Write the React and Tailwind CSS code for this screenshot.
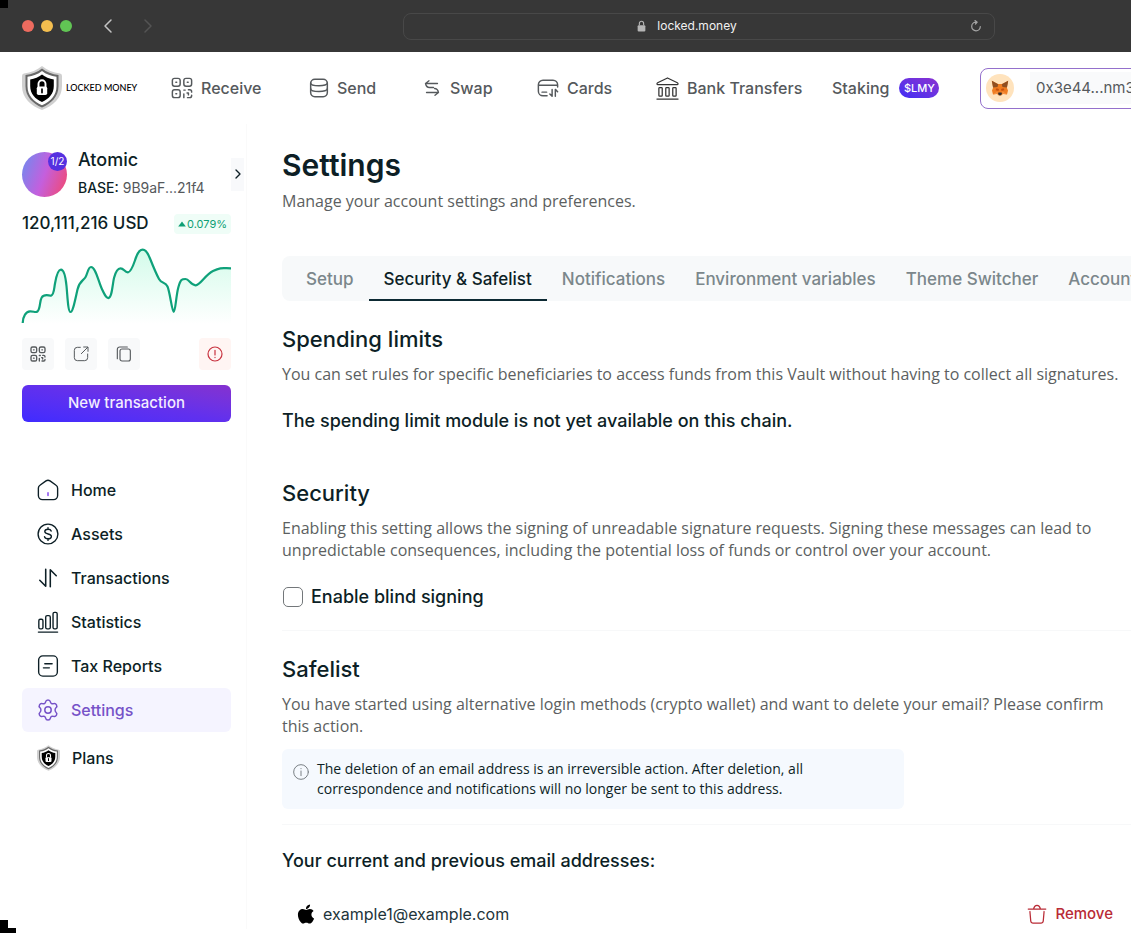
import { ChevronLeft, ChevronRight } from 'lucide-react'
import { FaApple } from 'react-icons/fa'
import clsx from 'clsx'

function Icon({ className, children, box = 24, stroke = 1.5 }) {
  return (
    <svg
      viewBox={`0 0 ${box} ${box}`}
      fill="none"
      stroke="currentColor"
      strokeWidth={stroke}
      strokeLinecap="round"
      strokeLinejoin="round"
      aria-hidden="true"
      className={clsx('shrink-0', className)}
    >
      {children}
    </svg>
  )
}

function QrIcon({ className, stroke = 1.6 }) {
  return (
    <Icon className={className} stroke={stroke}>
      <rect x="1.5" y="1.5" width="8.5" height="8.5" rx="2.4" />
      <rect x="14" y="1.5" width="8.5" height="8.5" rx="2.4" />
      <rect x="1.5" y="14" width="8.5" height="8.5" rx="2.4" />
      <path d="M5.3 5.7h.9M17.8 5.7h.9M5.3 18.2h.9M14 14.3h1.5M19 14h1.5a2 2 0 0 1 2 2v.5M14 18.5v4M17.5 17.5H19v2M22.5 20v.5a2 2 0 0 1-2 2H18" />
    </Icon>
  )
}

function DatabaseIcon({ className }) {
  return (
    <Icon className={className} stroke={1.8}>
      <rect x="2" y="1.5" width="20" height="21" rx="5" />
      <path d="M2 6c0 2 4 3.3 10 3.3S22 8 22 6M2 13c0 2 4 3.3 10 3.3S22 15 22 13" />
    </Icon>
  )
}

function SwapIcon({ className }) {
  return (
    <Icon className={className} box={16} stroke={1.3}>
      <path d="M13.5 3.5h-12L5 .8M1.5 3.5C2 6 3 7.5 5.5 7.5h4M2.5 12.5h12L11 15.3M14.5 12.5c-.5-2.500-1.500-4-4-4" />
    </Icon>
  )
}

function CardIcon({ className }) {
  return (
    <Icon className={className} stroke={1.6}>
      <path d="M11 20.5H6.5A5 5 0 0 1 1.5 15.5v-7a5 5 0 0 1 5-5h11a5 5 0 0 1 5 5V11M1.5 9h21M5.5 16.5h5" />
      <path d="M16.5 13.5V21L14 18.5M20 21v-7.5l2.5 2.500" />
    </Icon>
  )
}

function BankIcon({ className }) {
  return (
    <Icon className={className} stroke={1.3}>
      <path d="M2 8c-1.2 0-1.3-1.5-.3-2L12 1l10.3 5c1 .5.9 2-.3 2Z" />
      <rect x="3" y="11" width="3.5" height="9" rx=".8" />
      <rect x="10.2" y="11" width="3.5" height="9" rx=".8" />
      <rect x="17.5" y="11" width="3.5" height="9" rx=".8" />
      <path d="M1 23h22" />
    </Icon>
  )
}

function HomeIcon({ className }) {
  return (
    <Icon className={className}>
      <path d="M3.2 6.8 9.8 2.1a3.8 3.8 0 0 1 4.4 0l6.6 4.7a3.8 3.8 0 0 1 1.7 3.2v8a4.5 4.5 0 0 1-4.5 4.5H6A4.5 4.5 0 0 1 1.5 18v-8a3.8 3.8 0 0 1 1.7-3.2Z" />
      <path d="M12 15v3" stroke="#7c3aed" />
    </Icon>
  )
}

function AssetsIcon({ className }) {
  return (
    <Icon className={className}>
      <circle cx="12" cy="12" r="10.8" />
      <path d="M15.5 8.8c-.4-1.3-1.7-2-3.5-2-2 0-3.500 1-3.500 2.600 0 3.700 7.200 1.600 7.200 5.200 0 1.600-1.600 2.600-3.700 2.600s-3.500-.8-3.800-2.300M12 5v1.800M12 17.200V19" />
    </Icon>
  )
}

function TransactionsIcon({ className }) {
  return (
    <Icon className={className} stroke={1.7}>
      <path d="M9.5 2.5V21L3 14.5M14.5 21.5V3L21 9.5" />
    </Icon>
  )
}

function StatisticsIcon({ className }) {
  return (
    <Icon className={className}>
      <rect x="2" y="9" width="4.5" height="10.5" rx="1.6" />
      <rect x="9.5" y="5" width="5" height="14.5" rx="1.6" />
      <rect x="17.5" y="1.5" width="4.5" height="18" rx="1.6" />
      <path d="M1.5 23h21" />
    </Icon>
  )
}

function ReportsIcon({ className }) {
  return (
    <Icon className={className}>
      <rect x="1.8" y="1" width="20.4" height="22" rx="4.5" />
      <path d="M8.5 9.5h8M7 14h6.5" />
    </Icon>
  )
}

function SettingsIcon({ className }) {
  return (
    <Icon className={className} stroke={1.6}>
      <circle cx="12" cy="12" r="3.5" />
      <path d="M9.4 3.1C9.9.3 14.1.3 14.6 3.1c.3 1.7 1.9 2.6 3.5 2 2.7-1 4.8 2.7 2.6 4.5-1.3 1.1-1.3 3.7 0 4.8 2.2 1.8.1 5.5-2.6 4.5-1.6-.6-3.2.3-3.5 2-.5 2.8-4.7 2.8-5.2 0-.3-1.7-1.9-2.6-3.5-2-2.7 1-4.8-2.7-2.6-4.5 1.3-1.1 1.3-3.7 0-4.8C1.1 7.800 3.200 4.100 5.900 5.100c1.600.6 3.200-.3 3.500-2Z" />
    </Icon>
  )
}

function ShareIcon({ className }) {
  return (
    <Icon className={className}>
      <path d="M11 2H6.5A4.5 4.5 0 0 0 2 6.5v11A4.5 4.5 0 0 0 6.5 22h11a4.5 4.5 0 0 0 4.5-4.5V12M12.5 11.5 22 2M16 1.5h6.500V8" />
    </Icon>
  )
}

function CopyIcon({ className }) {
  return (
    <Icon className={className} stroke={1.7}>
      <rect x="6" y="4.5" width="15.5" height="18" rx="3" />
      <path d="M2 19V5a3.5 3.5 0 0 1 3.5-3.5H17" />
    </Icon>
  )
}

function AlertIcon({ className }) {
  return (
    <Icon className={className} stroke={1.8}>
      <circle cx="12" cy="12" r="10.5" />
      <path d="M12 6.5v7M12 17v.3" />
    </Icon>
  )
}

function InfoIcon({ className }) {
  return (
    <Icon className={className} stroke={1.5}>
      <circle cx="12" cy="12" r="11" />
      <path d="M12 10.5v7M12 6.8v.3" />
    </Icon>
  )
}

function TrashIcon({ className }) {
  return (
    <Icon className={className} stroke={1.5}>
      <path d="M1.5 6h21M8 5.500C8.500 3 9.500 1.500 12 1.500s3.500 1.500 4 4M3.500 9l1 11.500a2.500 2.500 0 0 0 2.500 2.300h10a2.500 2.500 0 0 0 2.500-2.300l1-11.500" />
    </Icon>
  )
}

function Shield({ className }) {
  return (
    <svg viewBox="0 0 40 44" aria-hidden="true" className={clsx('shrink-0', className)}>
      <path d="M20 0c5 4 11 6.500 18 7.500q2 .3 2 2.500v10c0 12-9 20-20 24C9 40 0 32 0 20V10q0-2.200 2-2.500C9 6.500 15 4 20 0Z" fill="#d0d0d0" />
      <path d="M20 2.500c4.500 3.500 10 5.700 16.500 6.500v11c0 11-7.500 17.500-16.500 21.500C11 37.500 3.500 31 3.500 20V9C10 8.200 15.500 6 20 2.500Z" fill="#686868" />
      <path d="M20 5c4 3.200 9 5 14.500 5.800V20c0 9.500-6 15.500-14.500 19.300C11.500 35.500 5.500 29.500 5.500 20v-9.200C11 10 16 8.200 20 5Z" fill="#fff" />
      <path d="M20 8.500c3.300 2.600 7.300 4.200 11.800 4.900V20c0 8-5 12.800-11.800 16C13.200 32.800 8.200 28 8.200 20v-6.600c4.500-.7 8.500-2.300 11.800-4.900Z" fill="#000" />
      <path d="M16.500 21v-3.200a3.500 3.500 0 0 1 7 0V21" fill="none" stroke="#fff" strokeWidth="1.9" />
      <rect x="14.8" y="20.5" width="10.4" height="8.5" rx="1.8" fill="#fff" />
      <path d="M20 23v3.6" stroke="#000" strokeWidth="1.7" strokeLinecap="round" />
    </svg>
  )
}

function Fox({ className }) {
  return (
    <svg viewBox="0 0 18 16" aria-hidden="true" className={className}>
      <path d="M.8.8 2.200 7.500 1 10.500 2 14.500 6 14l2 1.500h2L12 14l4 .5 1-4-1.200-3L17.200.8 11 4H7Z" fill="#ef7d22" />
      <path d="M.8.8 7.200 4.200 6.500 7 2 7.500ZM17.200.8l-6.400 3.400.7 2.800 4.500.5Z" fill="#8f4f22" />
      <path d="m5.500 8.300 2.500.7L7.500 11 4.500 10.300ZM12.500 8.300l-2.500.7.500 2 3-.7Z" fill="#c8520f" />
      <path d="m7 13 .8-.6h2.400l.8.600-.8 2.200H7.800Z" fill="#33302e" />
      <path d="M2 14.300 6.500 11.500l.3 2.300ZM16 14.300 11.500 11.500l-.3 2.300Z" fill="#f79443" />
    </svg>
  )
}

const topNav = [
  { label: 'Receive', icon: QrIcon, size: 'size-[22px]' },
  { label: 'Send', icon: DatabaseIcon, size: 'size-5' },
  { label: 'Swap', icon: SwapIcon, size: 'mr-[2px] size-4' },
  { label: 'Cards', icon: CardIcon, size: 'size-[22px]' },
  { label: 'Bank Transfers', icon: BankIcon, size: 'size-[23px] text-[#333]' },
]

const sideNav = [
  { label: 'Home', icon: HomeIcon },
  { label: 'Assets', icon: AssetsIcon },
  { label: 'Transactions', icon: TransactionsIcon },
  { label: 'Statistics', icon: StatisticsIcon },
  { label: 'Tax Reports', icon: ReportsIcon },
  { label: 'Settings', icon: SettingsIcon, active: true },
]

const tabs = [
  'Setup',
  'Security & Safelist',
  'Notifications',
  'Environment variables',
  'Theme Switcher',
  'Account',
]

const balanceLine =
  'M.7 75C1 68 4 63.500 8 63.300S13 65 15.500 63.500C18.500 61 17.500 53 19.700 49.500S26 47 29 47.800C32 47 32 41 33 35.500 34.500 27 36.500 21.500 39 21.700S43.500 28 44.500 38C45.500 48 46 64 48.500 64S53.500 50 55.500 41.500C57.500 33 61 33 63.300 29.500S66 19 69 19C73.500 19 76.500 33.500 79.500 40S84 50 86.300 50.200C90 50 90.500 36 92 30S95 20.300 98.500 20.300 102.500 24.500 106 24.300 112 15 114 9.500 118 1.700 120.700 1.700 126 5.500 128 10.500 134 25.500 137 31 143 33 145.500 38.500 150 64 151.700 64 154 48 156.300 39.500 160 31 163.500 31 169 37.500 173.700 37.300 183 27 191 23 201 20.300 209 20.300'

function BrowserBar() {
  return (
    <div className="flex h-[52px] items-center bg-[#373737] pl-[22px]">
      <div className="flex w-[74px] gap-[7px]">
        <span className="size-3 rounded-full bg-[#ed6b5f]" />
        <span className="size-3 rounded-full bg-[#f4be4f]" />
        <span className="size-3 rounded-full bg-[#61c554]" />
      </div>
      <button aria-label="Back" className="text-[#c4c4c4]">
        <ChevronLeft className="size-6" strokeWidth={1.5} />
      </button>
      <button aria-label="Forward" className="ml-4 text-[#545454]">
        <ChevronRight className="size-6" strokeWidth={1.5} />
      </button>
      <div className="mr-[136px] ml-[243px] flex h-[27px] flex-1 items-center rounded-lg border border-[#484848] px-3">
        <div className="flex flex-1 items-center justify-center gap-[11px] pr-3 text-[12px] text-[#f1f1f1]">
          <svg viewBox="0 0 10 14" aria-hidden="true" className="h-3 w-[9px]">
            <path d="M2.500 6V4a2.500 2.500 0 0 1 5 0v2" fill="none" stroke="#b5b5b5" strokeWidth="1.3" />
            <rect x=".5" y="6" width="9" height="7.5" rx="1.3" fill="#b5b5b5" />
          </svg>
          locked.money
        </div>
        <button aria-label="Reload" className="text-[#a5a5a5]">
          <Icon className="size-3" box={12} stroke={1.2}>
            <path d="M6 2.200A4.300 4.300 0 1 0 10.300 6.500M5 .5l2.200 1.700L5.500 4" />
          </Icon>
        </button>
      </div>
    </div>
  )
}

function Header() {
  return (
    <header className="flex h-[72px] items-center pl-[22px] text-[16px] font-medium whitespace-nowrap text-[#55595c]">
      <a href="#home" className="flex w-[149px] shrink-0 items-center gap-1 font-['Lato',sans-serif] text-[9px] text-black">
        <Shield className="h-11 w-10" />
        LOCKED MONEY
      </a>
      <nav className="grid shrink-0 grid-cols-[138px_115px_113px_119px_176px_148px]">
        {topNav.map(({ label, icon: NavIcon, size }) => (
          <a key={label} href="#nav" className="flex items-center gap-2">
            <NavIcon className={size} />
            {label}
          </a>
        ))}
        <a href="#staking" className="flex items-center gap-[10px]">
          Staking
          <span className="flex h-5 w-10 items-center justify-center rounded-full bg-linear-to-tr from-[#3f2bf5] to-[#8a2fd0] text-[11px] text-white">
            $LMY
          </span>
        </a>
      </nav>
      <button className="flex h-[41px] w-[220px] shrink-0 items-center gap-4 rounded-lg border border-[#9470cc] pl-[5px]">
        <span className="flex size-7 items-center justify-center rounded-full bg-[#ffe3bd]">
          <Fox className="h-4 w-[18px]" />
        </span>
        <span className="flex h-8 flex-1 items-center bg-[#f9fafb] pl-[6px] text-[15px] font-normal">0x3e44...nm3f</span>
      </button>
    </header>
  )
}

function SquareButton({ label, danger, children }) {
  return (
    <button
      aria-label={label}
      className={clsx(
        'flex size-8 items-center justify-center rounded',
        danger ? 'ml-auto bg-[#fff5f3] text-[#c8323f]' : 'bg-[#f8f9fa] text-[#55595c]',
      )}
    >
      {children}
    </button>
  )
}

function Sidebar() {
  return (
    <aside className="w-[247px] shrink-0 border-r border-[#fafafa] pt-[22px] pl-[22px]">
      <div className="flex items-center">
        <div className="relative mr-[11px] size-[45px] shrink-0 rounded-full bg-linear-[110deg] from-[#6b8df0] via-[#c45fdd] via-50% to-[#f5476a]">
          <span className="absolute top-0 right-0 flex size-[19px] items-center justify-center rounded-full bg-[#5530e0] text-[10px] text-white">
            1/2
          </span>
        </div>
        <div className="min-w-0 flex-1 whitespace-nowrap">
          <p className="text-[18px] leading-7 font-medium">Atomic</p>
          <p className="text-[14px] leading-7 text-[#55595c]">
            <span className="font-medium text-[#0d1f26]">BASE:</span> 9B9aF...21f4
          </p>
        </div>
        <button aria-label="Collapse sidebar" className="mr-[2px] flex h-[33px] w-[13px] items-center justify-center bg-[#f8f9fb]">
          <ChevronRight className="size-4 shrink-0" strokeWidth={2} />
        </button>
      </div>

      <div className="mr-[15px]">
        <div className="mt-[6px] flex h-8 items-center justify-between">
          <p className="text-[17px] font-medium">120,111,216 USD</p>
          <span className="flex h-5 items-center gap-px rounded-sm bg-[#effdf7] px-1 text-[11px] text-[#0f9f74]">
            <svg viewBox="0 0 8 6" aria-hidden="true" className="h-[6px] w-2">
              <path d="M4 .5 7.800 5.500H.2Z" fill="currentColor" />
            </svg>
            0.079%
          </span>
        </div>

        <svg viewBox="0 0 209 76" preserveAspectRatio="none" aria-hidden="true" className="mt-2 h-[76px] w-full overflow-visible">
          <defs>
            <linearGradient id="balanceFill" x1="0" y1="0" x2="0" y2="1">
              <stop offset="0" stopColor="#d3fbea" />
              <stop offset="1" stopColor="#d3fbea" stopOpacity="0" />
            </linearGradient>
          </defs>
          <path d={`${balanceLine}V76H.7Z`} fill="url(#balanceFill)" />
          <path d={balanceLine} fill="none" stroke="#0fa17a" strokeWidth="2.2" />
        </svg>

        <div className="mt-[14px] flex gap-[11px]">
          <SquareButton label="Show QR code">
            <QrIcon className="size-4" stroke={2} />
          </SquareButton>
          <SquareButton label="Open in explorer">
            <ShareIcon className="size-4" />
          </SquareButton>
          <SquareButton label="Copy address">
            <CopyIcon className="size-4" />
          </SquareButton>
          <SquareButton label="Show alerts" danger>
            <AlertIcon className="size-4" />
          </SquareButton>
        </div>

        <button className="mt-[15px] h-[37px] w-full rounded-md bg-linear-to-tr from-[#3f2bff] via-[#6130ee] via-50% to-[#8531cf] text-[15px] font-medium text-[#f3edff]">
          New transaction
        </button>

        <nav className="mt-[46px] text-[16px] font-medium">
          {sideNav.map(({ label, icon: NavIcon, active }) => (
            <a
              key={label}
              href="#page"
              className={clsx(
                'flex h-11 items-center gap-3 rounded-md pl-[15px]',
                active && 'bg-[#f5f4ff] text-[#7652c8]',
              )}
            >
              <NavIcon className="size-[22px]" />
              {label}
            </a>
          ))}
          <a href="#plans" className="mt-1 flex h-11 items-center gap-3 pl-[15px]">
            <Shield className="h-[26px] w-[23px]" />
            Plans
          </a>
        </nav>
      </div>
    </aside>
  )
}

function Section({ title, children }) {
  return (
    <section>
      <h2 className="text-[22px] leading-8 font-medium">{title}</h2>
      {children}
    </section>
  )
}

function Text({ className, children }) {
  return (
    <p className={clsx("font-['Open_Sans','Liberation_Sans',sans-serif] text-[16px] leading-[22px] text-[#5c5f61]", className)}>
      {children}
    </p>
  )
}

function Settings() {
  return (
    <main className="min-w-0 flex-1 pt-5 pl-[35px]">
      <h1 className="text-[30px] leading-[42px] font-semibold">Settings</h1>
      <Text className="mt-1">Manage your account settings and preferences.</Text>

      <div role="tablist" className="mt-11 flex h-[45px] overflow-hidden rounded-l-lg bg-[#f7f9fa] pl-[9px] text-[17px] font-medium whitespace-nowrap text-[#7b878b]">
        {tabs.map((tab) => {
          const active = tab === 'Security & Safelist'
          return (
            <button
              key={tab}
              role="tab"
              aria-selected={active}
              className={clsx('shrink-0 border-b-2 px-[15px] pt-1', active ? 'border-[#0d2a33] text-[#0d1f26]' : 'border-transparent')}
            >
              {tab}
            </button>
          )
        })}
      </div>

      <div className="mt-[22px]">
        <Section title="Spending limits">
          <Text className="mt-2 pr-2">
            You can set rules for specific beneficiaries to access funds from this Vault without having to collect all signatures.
          </Text>
          <p className="mt-6 text-[18px] leading-6 font-medium">
            The spending limit module is not yet available on this chain.
          </p>
        </Section>
      </div>

      <div className="mt-11 border-b border-[#f7f8f9] pb-[21px]">
        <Section title="Security">
          <Text className="mt-2 pr-5">
            Enabling this setting allows the signing of unreadable signature requests. Signing these messages can lead to
            unpredictable consequences, including the potential loss of funds or control over your account.
          </Text>
          <label className="mt-6 flex items-center gap-2 pl-px text-[18px] leading-6 font-medium">
            <input type="checkbox" className="size-5 appearance-none rounded-[5px] border border-[#73777a] bg-white" />
            Enable blind signing
          </label>
        </Section>
      </div>

      <div className="mt-[22px] border-b border-[#f7f8f9] pb-[15px]">
        <Section title="Safelist">
          <Text className="mt-2 pr-5">
            You have started using alternative login methods (crypto wallet) and want to delete your email? Please confirm
            this action.
          </Text>
          <div className="mt-3 flex max-w-[622px] items-start gap-2 rounded-md bg-[#f5f9fe] py-[10px] pr-20 pl-[11px]">
            <InfoIcon className="mt-[5px] size-4 text-[#7a8085]" />
            <p className="font-['Open_Sans','Liberation_Sans',sans-serif] text-[14px] leading-5">
              The deletion of an email address is an irreversible action. After deletion, all correspondence and
              notifications will no longer be sent to this address.
            </p>
          </div>
        </Section>
      </div>

      <h3 className="mt-6 text-[18px] leading-6 font-medium">Your current and previous email addresses:</h3>
      <div className="mt-[26px] flex items-center gap-[6px] pr-[18px] pl-[13px] text-[15px] leading-[30px]">
        <FaApple className="size-[22px] text-black" />
        <span className="text-[16px] text-[#22343a]">example1@example.com</span>
        <button className="ml-auto flex items-center gap-2 font-medium text-[#b92b36]">
          <TrashIcon className="size-5" />
          Remove
        </button>
      </div>
    </main>
  )
}

export default function App() {
  return (
    <div className="relative min-h-screen overflow-hidden bg-white font-['Inter','Liberation_Sans',sans-serif] text-[#0d1f26]">
      <BrowserBar />
      <Header />
      <div className="flex">
        <Sidebar />
        <Settings />
      </div>
      <span className="absolute top-0 left-0 size-2 bg-black" />
      <span className="absolute bottom-0 left-0 h-[13px] w-2 bg-black" />
      <span className="absolute bottom-0 left-2 h-[5px] w-2 bg-black" />
    </div>
  )
}
